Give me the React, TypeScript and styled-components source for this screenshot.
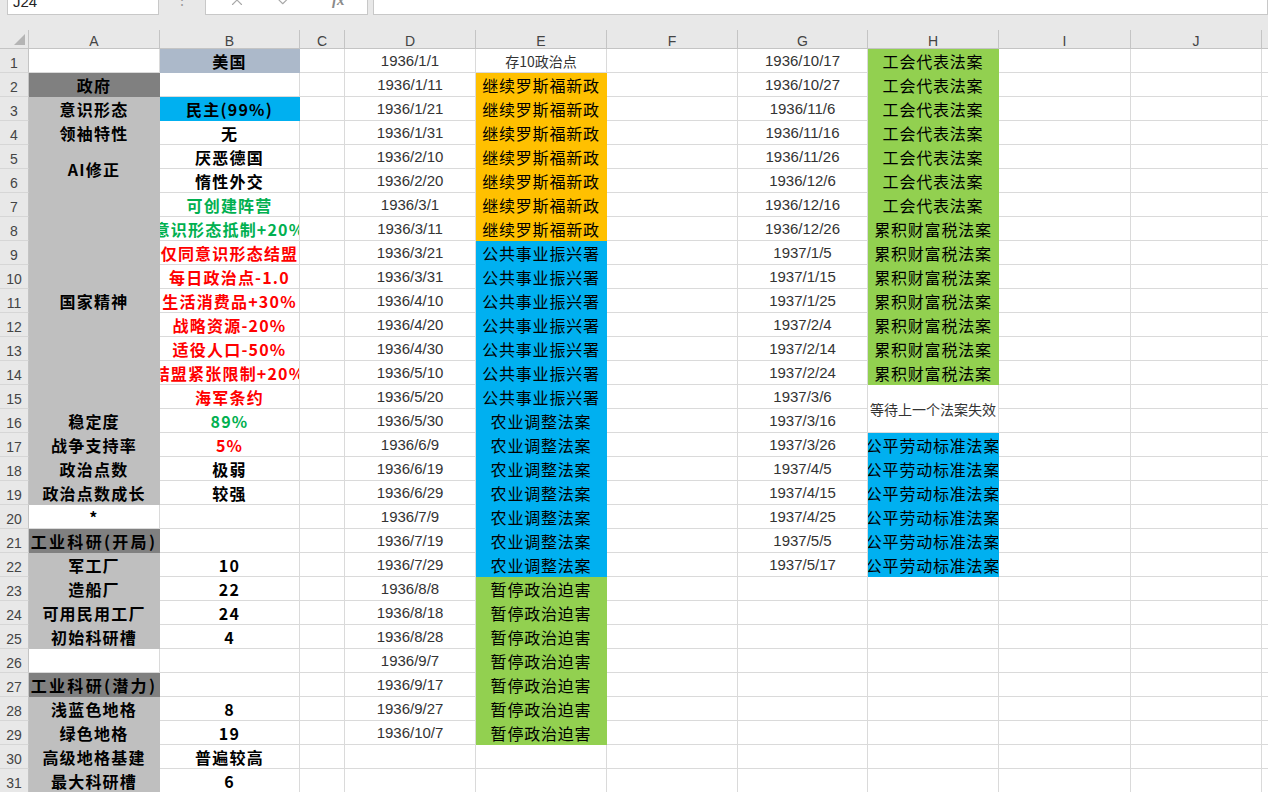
import * as React from "react";
import styled, { createGlobalStyle, css } from "styled-components";
import { X, Check } from "lucide-react";

const GlobalStyle = createGlobalStyle`
  html, body {
    margin: 0;
    padding: 0;
    background: #ffffff;
    overflow: hidden;
  }
  body {
    font-family: "Liberation Sans", "Noto Sans CJK SC", sans-serif;
  }
`;

// Palette taken from the sheet
const fill = {
  gray: "#bfbfbf",
  dark: "#808080",
  slate: "#acb9ca",
  sky: "#00b0f0",
  amber: "#ffc000",
  lime: "#92d050",
};

const tone = {
  ink: "#000000",
  red: "#ff0000",
  green: "#00b050",
  soft: "#333333",
};

type FontKind = "label" | "plain" | "date" | "note";

const fonts: Record<FontKind, ReturnType<typeof css>> = {
  label: css`
    font-family: "Noto Sans CJK SC", sans-serif;
    font-weight: 700;
    font-size: 16px;
    letter-spacing: 1.2px;
    line-height: 1;
  `,
  plain: css`
    font-family: "Noto Sans CJK SC", sans-serif;
    font-weight: 400;
    font-size: 16px;
    letter-spacing: 0.8px;
    line-height: 1;
  `,
  date: css`
    font-family: "Liberation Sans", sans-serif;
    font-size: 15px;
    line-height: 1;
  `,
  note: css`
    font-family: "Noto Sans CJK SC", sans-serif;
    font-size: 14px;
    line-height: 1;
  `,
};

const COLS = ["A", "B", "C", "D", "E", "F", "G", "H", "I", "J", "K"];
const WIDTHS = [131, 140, 45, 131, 131, 131, 130, 131, 132, 131, 100];
const ROWS = 31;

type CellDef = {
  text?: string;
  fill?: string;
  tone?: string;
  font?: FontKind;
  span?: number;
  spread?: number;
};

const sheet: Record<string, CellDef> = {};
const put = (ref: string, def: CellDef) => {
  sheet[ref] = def;
};

// Column A labels
const labelA: [number, string, string?, number?][] = [
  [2, "政府", fill.dark],
  [3, "意识形态"],
  [4, "领袖特性"],
  [5, "AI修正", undefined, 2],
  [7, "国家精神", undefined, 9],
  [16, "稳定度"],
  [17, "战争支持率"],
  [18, "政治点数"],
  [19, "政治点数成长"],
  [21, "工业科研(开局)", fill.dark],
  [22, "军工厂"],
  [23, "造船厂"],
  [24, "可用民用工厂"],
  [25, "初始科研槽"],
  [27, "工业科研(潜力)", fill.dark],
  [28, "浅蓝色地格"],
  [29, "绿色地格"],
  [30, "高级地格基建"],
  [31, "最大科研槽"],
];
labelA.forEach(([r, text, f, span]) =>
  put(`A${r}`, {
    text,
    fill: f ?? fill.gray,
    font: "label",
    span,
    spread: text.includes("(") ? 2.3 : undefined,
  })
);
put("A20", { text: "*", font: "label" });

// Column B values
const valueB: [number, string, string?, string?][] = [
  [1, "美国", tone.ink, fill.slate],
  [3, "民主(99%)", tone.ink, fill.sky],
  [4, "无"],
  [5, "厌恶德国"],
  [6, "惰性外交"],
  [7, "可创建阵营", tone.green],
  [8, "意识形态抵制+20%", tone.green],
  [9, "仅同意识形态结盟", tone.red],
  [10, "每日政治点-1.0", tone.red],
  [11, "生活消费品+30%", tone.red],
  [12, "战略资源-20%", tone.red],
  [13, "适役人口-50%", tone.red],
  [14, "结盟紧张限制+20%", tone.red],
  [15, "海军条约", tone.red],
  [16, "89%", tone.green],
  [17, "5%", tone.red],
  [18, "极弱"],
  [19, "较强"],
  [22, "10"],
  [23, "22"],
  [24, "24"],
  [25, "4"],
  [28, "8"],
  [29, "19"],
  [30, "普遍较高"],
  [31, "6"],
];
valueB.forEach(([r, text, t, f]) =>
  put(`B${r}`, { text, tone: t, fill: f, font: "label" })
);

// Column D / G dates
const datesD = [
  "1936/1/1", "1936/1/11", "1936/1/21", "1936/1/31", "1936/2/10", "1936/2/20",
  "1936/3/1", "1936/3/11", "1936/3/21", "1936/3/31", "1936/4/10", "1936/4/20",
  "1936/4/30", "1936/5/10", "1936/5/20", "1936/5/30", "1936/6/9", "1936/6/19",
  "1936/6/29", "1936/7/9", "1936/7/19", "1936/7/29", "1936/8/8", "1936/8/18",
  "1936/8/28", "1936/9/7", "1936/9/17", "1936/9/27", "1936/10/7",
];
const datesG = [
  "1936/10/17", "1936/10/27", "1936/11/6", "1936/11/16", "1936/11/26",
  "1936/12/6", "1936/12/16", "1936/12/26", "1937/1/5", "1937/1/15",
  "1937/1/25", "1937/2/4", "1937/2/14", "1937/2/24", "1937/3/6", "1937/3/16",
  "1937/3/26", "1937/4/5", "1937/4/15", "1937/4/25", "1937/5/5", "1937/5/17",
];
datesD.forEach((d, i) => put(`D${i + 1}`, { text: d, font: "date", tone: tone.soft }));
datesG.forEach((d, i) => put(`G${i + 1}`, { text: d, font: "date", tone: tone.soft }));

// Policy runs: [column, first row, count, text, fill]
const runs: [string, number, number, string, string][] = [
  ["E", 2, 7, "继续罗斯福新政", fill.amber],
  ["E", 9, 7, "公共事业振兴署", fill.sky],
  ["E", 16, 7, "农业调整法案", fill.sky],
  ["E", 23, 7, "暂停政治迫害", fill.lime],
  ["H", 1, 7, "工会代表法案", fill.lime],
  ["H", 8, 7, "累积财富税法案", fill.lime],
  ["H", 17, 6, "公平劳动标准法案", fill.sky],
];
runs.forEach(([c, start, n, text, f]) => {
  for (let i = 0; i < n; i++) put(`${c}${start + i}`, { text, fill: f, font: "plain" });
});
put("E1", { text: "存10政治点", font: "note", tone: tone.soft });
put("H15", { text: "等待上一个法案失效", font: "note", tone: tone.soft, span: 2 });

/* ---------- chrome ---------- */

const Window = styled.div`
  width: 1268px;
  height: 792px;
  overflow: hidden;
  background: #e8e8e8;
  display: flex;
  flex-direction: column;
`;

const FormulaBar = styled.div`
  flex: none;
  height: 15px;
  display: flex;
  padding-left: 7px;
`;

const Box = styled.div<{ $w?: number }>`
  box-sizing: border-box;
  height: 15px;
  ${(p) => (p.$w ? `width: ${p.$w}px; flex: none;` : "flex: 1;")}
  background: #ffffff;
  border: 1px solid #c8c8c8;
  border-top: none;
  display: flex;
  align-items: flex-start;
  overflow: hidden;
`;

const NameText = styled.span`
  margin: -6px 0 0 5px;
  font-size: 15px;
  line-height: 15px;
  color: #222;
`;

const Grip = styled.div`
  width: 46px;
  flex: none;
  display: flex;
  justify-content: center;
  color: #9a9a9a;
  font-size: 14px;
  line-height: 1;
  overflow: hidden;

  span {
    margin-top: -7px;
  }
`;

const IconRow = styled.div`
  display: flex;
  align-items: flex-start;
  width: 100%;
  color: #a8a8a8;

  svg {
    margin-top: -9px;
    flex: none;
  }
`;

const IconSlot = styled.div<{ $pad: number }>`
  padding-left: ${(p) => p.$pad}px;
  display: flex;
`;

const Fx = styled.span`
  margin-top: -7px;
  font-family: "Liberation Serif", serif;
  font-style: italic;
  font-weight: 700;
  font-size: 15px;
  line-height: 15px;
  color: #8a8a8a;
`;

const Spacer = styled.div`
  width: 5px;
  flex: none;
`;

const Strip = styled.div`
  flex: none;
  height: 15px;
`;

/* ---------- sheet ---------- */

const Sheet = styled.div`
  display: grid;
  grid-template-columns: 29px ${WIDTHS.map((w) => `${w}px`).join(" ")};
  grid-template-rows: 19px repeat(${ROWS}, 24px);
  background: #ffffff;
`;

const Corner = styled.div`
  box-sizing: border-box;
  background: #e8e8e8;
  border-right: 1px solid #c4c4c4;
  border-bottom: 1px solid #c4c4c4;
  display: flex;
  align-items: flex-end;
  justify-content: flex-end;
  padding: 0 3px 3px 0;
`;

const ColHead = styled.div`
  box-sizing: border-box;
  background: #e8e8e8;
  border-right: 1px solid #c4c4c4;
  border-bottom: 1px solid #c4c4c4;
  display: flex;
  align-items: center;
  justify-content: center;
  padding-top: 3px;
  font-size: 14px;
  color: #444;
  overflow: hidden;
`;

const RowHead = styled.div`
  box-sizing: border-box;
  background: #e8e8e8;
  border-right: 1px solid #c4c4c4;
  border-bottom: 1px solid #d6d6d6;
  display: flex;
  align-items: flex-end;
  justify-content: center;
  padding-bottom: 2px;
  font-size: 14px;
  line-height: 1;
  color: #444;
`;

const Cell = styled.div<{
  $fill?: string;
  $tone?: string;
  $font: FontKind;
  $span: number;
  $spread?: number;
}>`
  grid-row: span ${(p) => p.$span};
  box-sizing: border-box;
  min-width: 0;
  background: ${(p) => p.$fill ?? "#ffffff"};
  border-right: 1px solid ${(p) => p.$fill ?? "#dadada"};
  border-bottom: 1px solid ${(p) => p.$fill ?? "#dadada"};
  display: flex;
  align-items: center;
  justify-content: center;
  overflow: hidden;
  white-space: nowrap;
  color: ${(p) => p.$tone ?? "#000000"};
  ${(p) => fonts[p.$font]}
  ${(p) => (p.$spread !== undefined ? `letter-spacing: ${p.$spread}px;` : "")}
`;

const Triangle = () => (
  <svg width="11" height="11" viewBox="0 0 11 11">
    <polygon points="11,0 11,11 0,11" fill="#b4b4b4" />
  </svg>
);

function buildCells() {
  const covered = new Set<string>();
  const out: React.ReactNode[] = [];
  for (let r = 1; r <= ROWS; r++) {
    out.push(<RowHead key={`rh${r}`}>{r}</RowHead>);
    COLS.forEach((c) => {
      const ref = `${c}${r}`;
      if (covered.has(ref)) return;
      const def = sheet[ref] ?? {};
      const span = def.span ?? 1;
      for (let k = 1; k < span; k++) covered.add(`${c}${r + k}`);
      out.push(
        <Cell
          key={ref}
          $fill={def.fill}
          $tone={def.tone}
          $font={def.font ?? "plain"}
          $span={span}
          $spread={def.spread}
        >
          {def.text}
        </Cell>
      );
    });
  }
  return out;
}

export default function App() {
  return (
    <Window>
      <GlobalStyle />
      <FormulaBar>
        <Box $w={152}>
          <NameText>J24</NameText>
        </Box>
        <Grip>
          <span>⋮</span>
        </Grip>
        <Box $w={163}>
          <IconRow>
            <IconSlot $pad={22}>
              <X size={18} strokeWidth={1.5} />
            </IconSlot>
            <IconSlot $pad={30}>
              <Check size={18} strokeWidth={1.5} />
            </IconSlot>
            <IconSlot $pad={38}>
              <Fx>fx</Fx>
            </IconSlot>
          </IconRow>
        </Box>
        <Spacer />
        <Box>
          <span />
        </Box>
      </FormulaBar>
      <Strip />
      <Sheet>
        <Corner>
          <Triangle />
        </Corner>
        {COLS.map((c) => (
          <ColHead key={c}>{c}</ColHead>
        ))}
        {buildCells()}
      </Sheet>
    </Window>
  );
}
